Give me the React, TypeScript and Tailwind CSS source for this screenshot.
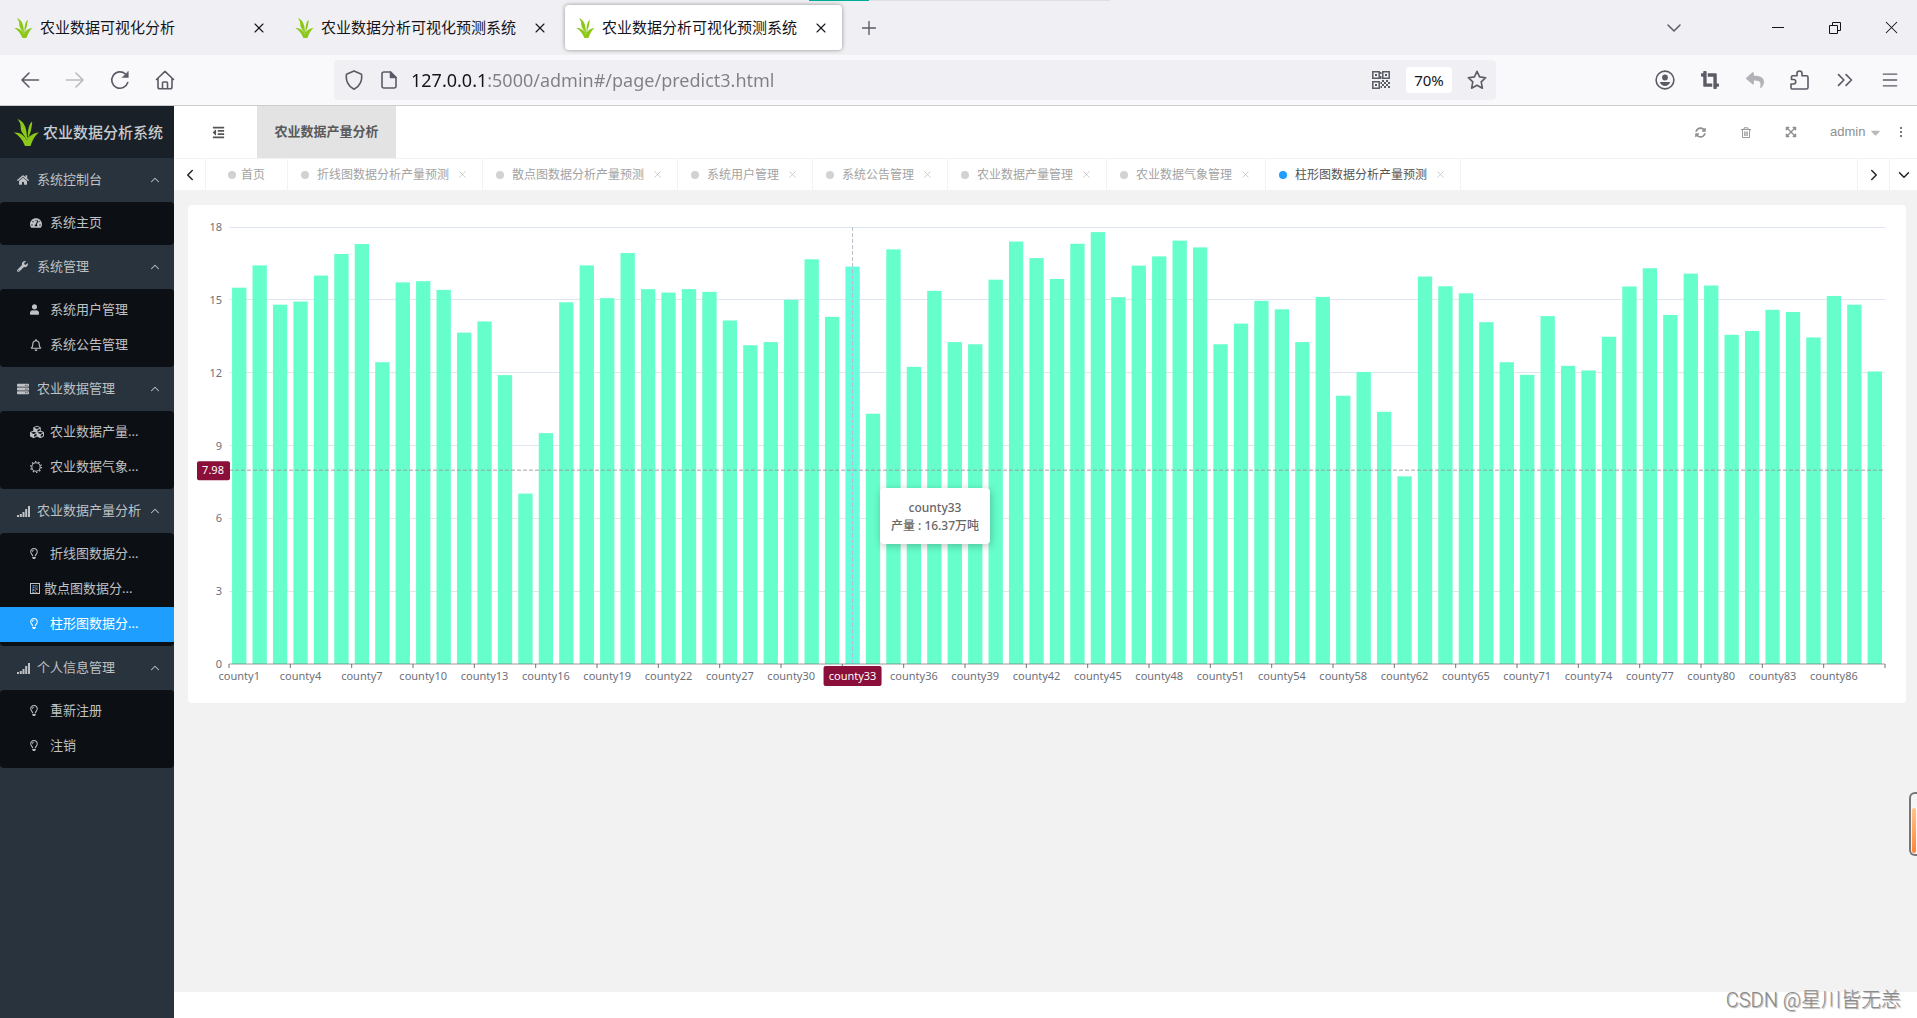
import type { ReactNode } from "react";
import {
  FaCaretDown,
  FaCropAlt,
  FaCubes,
  FaExpandArrowsAlt,
  FaHome,
  FaOutdent,
  FaRegBell,
  FaRegLightbulb,
  FaReply,
  FaServer,
  FaSyncAlt,
  FaTachometerAlt,
  FaUser,
  FaWrench,
} from "react-icons/fa";
import { ChevronDown, ChevronLeft, ChevronRight, ChevronsRight, ChevronUp, Menu, Plus, X } from "lucide-react";

const values = [
  15.5, 16.42, 14.8, 14.93, 16.0, 16.89, 17.3, 12.43, 15.72, 15.77, 15.41, 13.65, 14.11, 11.9, 7.02, 9.51, 14.9,
  16.42, 15.07, 16.93, 15.44, 15.3, 15.44, 15.33, 14.15, 13.13, 13.26, 15.0, 16.67, 14.3, 16.37, 10.31, 17.08, 12.24,
  15.37, 13.26, 13.17, 15.83, 17.4, 16.72, 15.86, 17.31, 17.79, 15.11, 16.41, 16.79, 17.44, 17.16, 13.17, 14.02,
  14.96, 14.61, 13.26, 15.12, 11.05, 12.03, 10.39, 7.73, 15.96, 15.56, 15.27, 14.08, 12.43, 11.91, 14.33, 12.28,
  12.09, 13.48, 15.55, 16.3, 14.38, 16.08, 15.59, 13.56, 13.72, 14.59, 14.5, 13.45, 15.16, 14.8, 12.05,
];

// every third category gets a label
const labels = [
  1, 4, 7, 10, 13, 16, 19, 22, 27, 30, 33, 36, 39, 42, 45, 48, 51, 54, 58, 62, 65, 71, 74, 77, 80, 83, 86,
];

const PLOT_HEIGHT = 437;
const MAX = 18;
const ACTIVE = 30;
const step = 100 / values.length;
const toY = (value: number) => PLOT_HEIGHT - (value / MAX) * PLOT_HEIGHT;

const Grass = ({ className }: { className?: string }) => (
  <svg viewBox="0 0 25 27" className={className} fill="#8cc81a" aria-hidden="true">
    <path d="M3.5 0C9.5 2 13 8 13 19C8 15 6.5 11 6.7 8C6.8 5 5.5 2.500 3.500 0z" />
    <path d="M18 2.500C15 5.500 13.800 10 13.800 18.500C16 15 17 12 17.300 9.500C17.600 7 18.500 5 18 2.500z" />
    <path d="M0 13.500C6 13 10.500 16.500 13 21.500C15.500 17 19 14 25 13.500C21.500 16 19 20 16.500 27H11C8.500 20.500 5 16.500 0 13.500z" />
    <path d="M9.500 15.500L13.200 21.500L16.800 15.500L13.500 18.500z" />
  </svg>
);

const Signal = () => (
  <svg viewBox="0 0 13 12" className="h-3 w-[13px]" fill="currentColor" aria-hidden="true">
    <path d="M0 10h2v2H0zM2.800 9h2v3h-2zM5.500 7h2v5h-2zM8.200 4h2v8h-2zM11 1h2v11h-2z" />
  </svg>
);

const Sun = () => (
  <svg viewBox="0 0 12 12" className="size-3" fill="none" stroke="currentColor" aria-hidden="true">
    <circle cx="6" cy="6" r="4.200" strokeWidth="1.100" />
    <circle cx="6" cy="6" r="5.300" strokeWidth="1.300" strokeDasharray="1.400 1.930" />
  </svg>
);

const MissingGlyph = () => (
  <span className="flex h-[11px] w-[10px] flex-col items-center justify-center border border-current text-[5px] leading-[4px]">
    <span>F0</span>
    <span>EC</span>
  </span>
);

const QrIcon = () => (
  <svg viewBox="0 0 18 18" className="size-[18px]" fill="none" stroke="#5b5b66" strokeWidth="1.500" aria-hidden="true">
    <path d="M.8.8h6.400v6.400H.8zM10.800.8h6.400v6.400h-6.400zM.8 10.800h6.400v6.400H.8z" />
    <path
      fill="#5b5b66"
      stroke="none"
      d="M3 3h2v2H3zM13 3h2v2h-2zM3 13h2v2H3zM8 1h1.500v2H8zM8 5h1.500v3H8zM10 9h2v2h-2zM14 9h2v2h-2zM12 11h2v2h-2zM16 11h2v2h-2zM10 13h2v2h-2zM14 13h2v2h-2zM12 15h2v2h-2zM16 15h2v2h-2zM8.500 11H10v2H8.500zM8.500 15H10v2H8.500z"
    />
  </svg>
);

const stroke = {
  fill: "none",
  stroke: "currentColor",
  strokeWidth: 1.6,
  strokeLinecap: "round",
  strokeLinejoin: "round",
} as const;

const BackIcon = () => (
  <svg viewBox="0 0 20 20" className="size-5" {...stroke} aria-hidden="true">
    <path d="M18.500 10H2M9 3L2 10l7 7" />
  </svg>
);

const ReloadIcon = () => (
  <svg viewBox="0 0 20 20" className="size-5" {...stroke} aria-hidden="true">
    <path d="M17.800 12.500A8.200 8.200 0 1 1 15.500 4" />
    <path d="M18.300 1.500v6h-6z" fill="currentColor" strokeWidth="0.500" />
  </svg>
);

const HomeIcon = () => (
  <svg viewBox="0 0 20 20" className="size-5" {...stroke} aria-hidden="true">
    <path d="M1.500 9.500L10 1.300l8.500 8.200M3 8.500V17a1.800 1.800 0 0 0 1.800 1.800h10.400A1.800 1.800 0 0 0 17 17V8.500M7.500 18.500V13a1 1 0 0 1 1-1h3a1 1 0 0 1 1 1v5.500" />
  </svg>
);

const ShieldIcon = () => (
  <svg viewBox="0 0 20 20" className="size-5 shrink-0 text-[#5b5b66]" {...stroke} aria-hidden="true">
    <path d="M10 1L17.500 4.300C18.500 10 16 16.500 10 19.300C4 16.500 1.500 10 2.500 4.300z" />
  </svg>
);

const DocIcon = () => (
  <svg viewBox="0 0 16 18" className="h-[18px] w-4 shrink-0 text-[#5b5b66]" {...stroke} aria-hidden="true">
    <path d="M9.500 1H3a2 2 0 0 0-2 2v12a2 2 0 0 0 2 2h10a2 2 0 0 0 2-2V6.500z" />
    <path d="M9.500 1v5.500H15z" fill="currentColor" />
  </svg>
);

const StarIcon = () => (
  <svg viewBox="0 0 20 20" className="size-5" {...stroke} aria-hidden="true">
    <path d="M10 1.300l2.600 5.600 6.100.8-4.500 4.200 1.200 6.300L10 15.200l-5.400 3 1.200-6.300L1.300 7.700l6.100-.8z" />
  </svg>
);

const AccountIcon = () => (
  <svg viewBox="0 0 20 20" className="size-5" {...stroke} aria-hidden="true">
    <circle cx="10" cy="10" r="8.900" />
    <circle cx="10" cy="7.500" r="2.900" fill="currentColor" stroke="none" />
    <path d="M4.800 12h10.400c-.5 2.300-2.700 4-5.200 4s-4.700-1.700-5.200-4z" fill="currentColor" stroke="none" />
  </svg>
);

const PuzzleIcon = () => (
  <svg viewBox="0 0 20 20" className="size-5" {...stroke} aria-hidden="true">
    <path d="M2 19a1 1 0 0 1-1-1v-4h2.500a2.200 2.200 0 0 0 0-4.500H1.500V7a1.200 1.200 0 0 1 1.200-1.200H7V3.500a2.500 2.500 0 0 1 5 0v2.300h4.500A1.500 1.500 0 0 1 18 7.300v10.200a1.500 1.500 0 0 1-1.500 1.500z" />
  </svg>
);

const RestoreIcon = () => (
  <svg viewBox="0 0 12 12" className="size-3" fill="none" stroke="#15141a" aria-hidden="true">
    <path d="M.5 3.500h8v8h-8zM3.500 3.500v-3h8v8h-3" />
  </svg>
);

const TrashIcon = () => (
  <svg viewBox="0 0 10 11" className="h-[11px] w-[10px]" fill="none" stroke="currentColor" aria-hidden="true">
    <path d="M0 2.500h10M3 2.500V.8h4v1.700M1.500 2.500v8h7v-8M3.700 4.500v4.500M5 4.500v4.500M6.300 4.500v4.500" strokeWidth="0.900" />
  </svg>
);

const browserTabs = [
  { title: "农业数据可视化分析", active: false },
  { title: "农业数据分析可视化预测系统", active: false },
  { title: "农业数据分析可视化预测系统", active: true },
];

const BrowserTabs = () => (
  <div className="relative flex h-[55px] items-center bg-[#f0f0f4] pl-[3px]">
    <div className="absolute top-0 left-[809px] flex h-px w-[301px] bg-[#e0e0e4]">
      <div className="w-[60px] bg-[#00ad94]" />
    </div>
    <div className="flex gap-1">
      {browserTabs.map((tab, index) => (
        <div
          key={index}
          className={
            tab.active
              ? "flex h-[45px] w-[277px] items-center rounded bg-white pr-[13px] pl-[11px] shadow-[0_0_4px_rgba(0,0,0,0.4)]"
              : "flex h-[45px] w-[277px] items-center rounded pr-[13px] pl-[11px]"
          }
        >
          <Grass className="h-5 w-[19px]" />
          <span className="ml-[7px] flex-1 text-[15px] whitespace-nowrap text-[#15141a]">{tab.title}</span>
          <button type="button" aria-label="关闭标签页" className="text-[#15141a]">
            <X size={16} strokeWidth={1.6} />
          </button>
        </div>
      ))}
    </div>
    <button type="button" aria-label="新建标签页" className="ml-4 text-[#5b5b66]">
      <Plus size={22} strokeWidth={1.5} />
    </button>
    <div className="ml-auto flex items-center">
      <button type="button" aria-label="列出标签页" className="mr-[65px] text-[#5b5b66]">
        <ChevronDown size={24} strokeWidth={1.5} />
      </button>
      <button type="button" aria-label="最小化" className="flex w-[54px] justify-center">
        <span className="h-px w-3 bg-[#15141a]" />
      </button>
      <button type="button" aria-label="还原" className="flex w-[60px] justify-center">
        <RestoreIcon />
      </button>
      <button type="button" aria-label="关闭" className="flex w-[52px] justify-center text-[#15141a]">
        <X size={21} strokeWidth={1.2} />
      </button>
    </div>
  </div>
);

const ToolButton = ({ label, children }: { label: string; children: ReactNode }) => (
  <button type="button" aria-label={label} className="flex h-10 w-[45px] items-center justify-center">
    {children}
  </button>
);

const BrowserToolbar = () => (
  <div className="flex h-[51px] items-center border-b border-[#cccccf] bg-[#f9f9fb] pr-[5px] pl-[7px] text-[#5b5b66]">
    <ToolButton label="后退">
      <BackIcon />
    </ToolButton>
    <ToolButton label="前进">
      <span className="rotate-180 opacity-40">
        <BackIcon />
      </span>
    </ToolButton>
    <ToolButton label="刷新">
      <ReloadIcon />
    </ToolButton>
    <ToolButton label="主页">
      <HomeIcon />
    </ToolButton>
    <div className="ml-[147px] flex h-10 flex-1 items-center rounded bg-[#f0f0f4] pr-[9px] pl-[10px]">
      <ShieldIcon />
      <span className="w-[17px]" />
      <DocIcon />
      <input
        type="text"
        aria-label="网址"
        defaultValue="127.0.0.1:5000/admin#/page/predict3.html"
        className="ml-[14px] min-w-0 flex-1 bg-[linear-gradient(90deg,#15141a_76px,#7f7f86_76px)] bg-clip-text font-['Noto_Sans',sans-serif] text-[18px] text-transparent outline-none"
      />
      <button type="button" aria-label="二维码">
        <QrIcon />
      </button>
      <button type="button" className="ml-4 h-[26px] w-[46px] rounded bg-white text-[15px] text-[#15141a]">
        70%
      </button>
      <button type="button" aria-label="收藏" className="ml-[15px]">
        <StarIcon />
      </button>
    </div>
    <div className="ml-[146px] flex">
      <ToolButton label="账户">
        <AccountIcon />
      </ToolButton>
      <ToolButton label="截图">
        <FaCropAlt size={18} />
      </ToolButton>
      <ToolButton label="撤销">
        <FaReply size={18} className="opacity-45" />
      </ToolButton>
      <ToolButton label="扩展">
        <PuzzleIcon />
      </ToolButton>
      <ToolButton label="更多工具">
        <ChevronsRight size={26} strokeWidth={1.5} />
      </ToolButton>
      <ToolButton label="菜单">
        <Menu size={20} strokeWidth={1.6} />
      </ToolButton>
    </div>
  </div>
);

const bulb = <FaRegLightbulb className="h-[11px] w-2" />;

const menu = [
  {
    title: "系统控制台",
    icon: <FaHome size={12} />,
    items: [{ title: "系统主页", icon: <FaTachometerAlt size={12} /> }],
  },
  {
    title: "系统管理",
    icon: <FaWrench size={11} />,
    items: [
      { title: "系统用户管理", icon: <FaUser className="h-[11px] w-[9px]" /> },
      { title: "系统公告管理", icon: <FaRegBell size={12} /> },
    ],
  },
  {
    title: "农业数据管理",
    icon: <FaServer size={12} />,
    items: [
      { title: "农业数据产量...", icon: <FaCubes size={14} /> },
      { title: "农业数据气象...", icon: <Sun /> },
    ],
  },
  {
    title: "农业数据产量分析",
    icon: <Signal />,
    items: [
      { title: "折线图数据分...", icon: bulb },
      { title: "散点图数据分...", icon: <MissingGlyph />, tight: true },
      { title: "柱形图数据分...", icon: bulb, active: true },
    ],
  },
  {
    title: "个人信息管理",
    icon: <Signal />,
    items: [
      { title: "重新注册", icon: bulb },
      { title: "注销", icon: bulb },
    ],
  },
];

const Sidebar = () => (
  <aside className="w-[174px] shrink-0 bg-[#28333e] text-[13px] text-[#bfc1c4]">
    <a href="#" className="flex h-[52px] items-center bg-[#192027] pl-[14px]">
      <Grass className="h-[27px] w-[25px]" />
      <span className="ml-1 text-[15px] font-medium whitespace-nowrap text-[#c8cacc]">农业数据分析系统</span>
    </a>
    {menu.map((group) => (
      <div key={group.title}>
        <button type="button" className="flex h-11 w-full items-center pr-3 pb-px pl-[17px]">
          <span className="flex w-5">{group.icon}</span>
          <span className="flex-1 text-left whitespace-nowrap">{group.title}</span>
          <ChevronUp size={14} strokeWidth={1.8} />
        </button>
        <div className="rounded-sm bg-[#0c0f13] py-1">
          {group.items.map((item) => (
            <a
              key={item.title}
              href="#"
              className={
                item.active
                  ? "flex h-[35px] items-center bg-[#1e9fff] pb-[2px] pl-[30px] text-white"
                  : "flex h-[35px] items-center pb-[2px] pl-[30px]"
              }
            >
              <span className={item.tight ? "flex w-[14px]" : "flex w-5"}>{item.icon}</span>
              <span className="whitespace-nowrap">{item.title}</span>
            </a>
          ))}
        </div>
      </div>
    ))}
  </aside>
);

const ToolbarIcon = ({ label, children }: { label: string; children: ReactNode }) => (
  <button type="button" aria-label={label} className="flex w-[45px] items-center justify-center">
    {children}
  </button>
);

const Header = () => (
  <header className="flex h-[52px] items-stretch bg-white text-[#8f8f8f]">
    <button type="button" aria-label="收起菜单" className="flex w-[83px] items-center justify-center pl-[5px] text-[#555]">
      <FaOutdent size={13} />
    </button>
    <button type="button" className="w-[139px] bg-[#e3e3e3] text-[13px] font-bold text-[#5a5a5a]">
      农业数据产量分析
    </button>
    <div className="ml-auto flex">
      <ToolbarIcon label="刷新">
        <FaSyncAlt size={11} />
      </ToolbarIcon>
      <ToolbarIcon label="清理">
        <TrashIcon />
      </ToolbarIcon>
      <ToolbarIcon label="全屏">
        <FaExpandArrowsAlt size={12} />
      </ToolbarIcon>
      <button
        type="button"
        className="flex w-[72px] items-center gap-[3px] pl-[17px] font-['Liberation_Sans',sans-serif] text-[13px]"
      >
        admin
        <FaCaretDown size={15} className="text-[#b8b8b8]" />
      </button>
      <button type="button" aria-label="更多" className="flex w-8 flex-col items-center justify-center gap-[2px]">
        <span className="size-[2px] bg-[#777]" />
        <span className="size-[2px] bg-[#777]" />
        <span className="size-[2px] bg-[#777]" />
      </button>
    </div>
  </header>
);

const pageTabs = [
  { title: "折线图数据分析产量预测", active: false },
  { title: "散点图数据分析产量预测", active: false },
  { title: "系统用户管理", active: false },
  { title: "系统公告管理", active: false },
  { title: "农业数据产量管理", active: false },
  { title: "农业数据气象管理", active: false },
  { title: "柱形图数据分析产量预测", active: true },
];

const PageTabs = () => (
  <nav className="flex h-[33px] border-y border-[#f3f3f3] bg-white text-[12px] whitespace-nowrap text-[#a3a3a3]">
    <button
      type="button"
      aria-label="向左"
      className="flex w-8 items-center justify-center border-r border-[#f3f3f3] text-[#222]"
    >
      <ChevronLeft size={18} strokeWidth={2} />
    </button>
    <a href="#" className="flex w-[82px] items-center border-r border-[#f3f3f3] pl-[22px]">
      <span className="mr-[5px] size-2 rounded-full bg-[#d2d2d2]" />
      首页
    </a>
    {pageTabs.map((tab) => (
      <div
        key={tab.title}
        className={
          tab.active
            ? "flex items-center border-r border-[#f3f3f3] pr-[14px] pl-[13px] text-[#555]"
            : "flex items-center border-r border-[#f3f3f3] pr-[14px] pl-[13px]"
        }
      >
        <span
          className={tab.active ? "mr-2 size-2 rounded-full bg-[#1e9fff]" : "mr-2 size-2 rounded-full bg-[#d2d2d2]"}
        />
        <a href="#">{tab.title}</a>
        <button type="button" aria-label={`关闭${tab.title}`} className="ml-2 text-[#c4c4c4]">
          <X size={11} strokeWidth={1.8} />
        </button>
      </div>
    ))}
    <button
      type="button"
      aria-label="向右"
      className="ml-auto flex w-8 items-center justify-center border-l border-[#f3f3f3] text-[#222]"
    >
      <ChevronRight size={18} strokeWidth={2} />
    </button>
    <button
      type="button"
      aria-label="展开标签"
      className="flex w-7 items-center justify-center border-l border-[#f3f3f3] text-[#222]"
    >
      <ChevronDown size={18} strokeWidth={2} />
    </button>
  </nav>
);

const BarChart = () => {
  const pointerX = `${(ACTIVE + 0.5) * step}%`;
  const pointerY = toY(7.98);
  return (
    <section className="relative mt-[14px] mr-[11px] ml-[14px] rounded bg-white pt-[22px] pr-[21px] pb-[39px] pl-[41px]">
      <svg
        width="100%"
        height={PLOT_HEIGHT}
        className="block overflow-visible font-['Noto_Sans',sans-serif] text-[11px]"
        role="img"
        aria-label="产量"
      >
        {[0, 3, 6, 9, 12, 15, 18].map((tick) => (
          <g key={tick}>
            {tick > 0 && (
              <line x1="0" x2="100%" y1={toY(tick)} y2={toY(tick)} stroke="#e0e6f1" shapeRendering="crispEdges" />
            )}
            <text x="-7" y={toY(tick) + 4} textAnchor="end" fill="#6e7079">
              {tick}
            </text>
          </g>
        ))}
        {values.map((value, index) => (
          <rect
            key={index}
            x={`${(index + 0.15) * step}%`}
            y={toY(value)}
            width={`${step * 0.7}%`}
            height={PLOT_HEIGHT - toY(value)}
            fill={index === ACTIVE ? "#67fddd" : "#66ffcc"}
          />
        ))}
        <line x1="0" x2="100%" y1={PLOT_HEIGHT} y2={PLOT_HEIGHT} stroke="#6e7079" opacity="0.700" />
        {labels.map((label, index) => (
          <g key={label}>
            <line
              x1={`${index * 3 * step}%`}
              x2={`${index * 3 * step}%`}
              y1={PLOT_HEIGHT}
              y2={PLOT_HEIGHT + 4}
              stroke="#6e7079"
            />
            <text x={`${(index * 3 + 0.5) * step}%`} y={PLOT_HEIGHT + 16} textAnchor="middle" fill="#6e7079">
              {label === 33 ? "" : `county${label}`}
            </text>
          </g>
        ))}
        <line x1="100%" x2="100%" y1={PLOT_HEIGHT} y2={PLOT_HEIGHT + 4} stroke="#6e7079" />
        <line x1={pointerX} x2={pointerX} y1="0" y2={PLOT_HEIGHT} stroke="#b9bec9" strokeDasharray="4 2" />
        <line
          x1="0"
          x2="100%"
          y1={pointerY}
          y2={pointerY}
          stroke="#999"
          strokeOpacity="0.600"
          strokeWidth="1.400"
          strokeDasharray="4 2"
        />
        <rect x="-32" y={pointerY - 9} width="33" height="19" rx="2" fill="#8a0f3a" />
        <text x="-16" y={pointerY + 4} textAnchor="middle" fill="#fff">
          7.98
        </text>
        <svg x={pointerX} y={PLOT_HEIGHT + 2} overflow="visible">
          <rect x="-29" y="0" width="58" height="20" rx="2" fill="#8a0f3a" />
          <text x="0" y="14" textAnchor="middle" fill="#fff">
            county33
          </text>
        </svg>
      </svg>
      <div className="absolute top-[283px] left-[692px] flex h-14 w-[110px] flex-col items-center justify-center rounded-sm bg-white pt-[2px] text-[12px] leading-[18px] font-medium text-[#666] shadow-[1px_2px_8px_rgba(0,0,0,0.25)]">
        <span>county33</span>
        <span className="whitespace-nowrap">产量 : 16.37万吨</span>
      </div>
    </section>
  );
};

export default function App() {
  return (
    <div className="relative flex min-h-screen flex-col overflow-hidden bg-white font-['Noto_Sans','Noto_Sans_CJK_SC',sans-serif]">
      <BrowserTabs />
      <BrowserToolbar />
      <div className="flex flex-1">
        <Sidebar />
        <main className="flex min-w-0 flex-1 flex-col pb-[26px]">
          <Header />
          <PageTabs />
          <div className="flex-1 bg-[#f2f2f2]">
            <BarChart />
          </div>
        </main>
      </div>
      <div className="absolute right-0 bottom-[162px] h-16 w-2 rounded-l-md border-2 border-r-0 border-[#777] bg-[#f5f5f5] pt-[14px] pb-px pl-px">
        <div className="h-full w-1 rounded-full bg-linear-to-b from-[#ffc58a] to-[#ff8533]" />
      </div>
      <div className="absolute right-4 bottom-1 font-['Roboto','Noto_Sans_CJK_SC',sans-serif] text-[20px] leading-7 font-light text-[#8a8a8a] [text-shadow:1px_1px_1px_#aaa]">
        CSDN @星川皆无恙
      </div>
    </div>
  );
}
